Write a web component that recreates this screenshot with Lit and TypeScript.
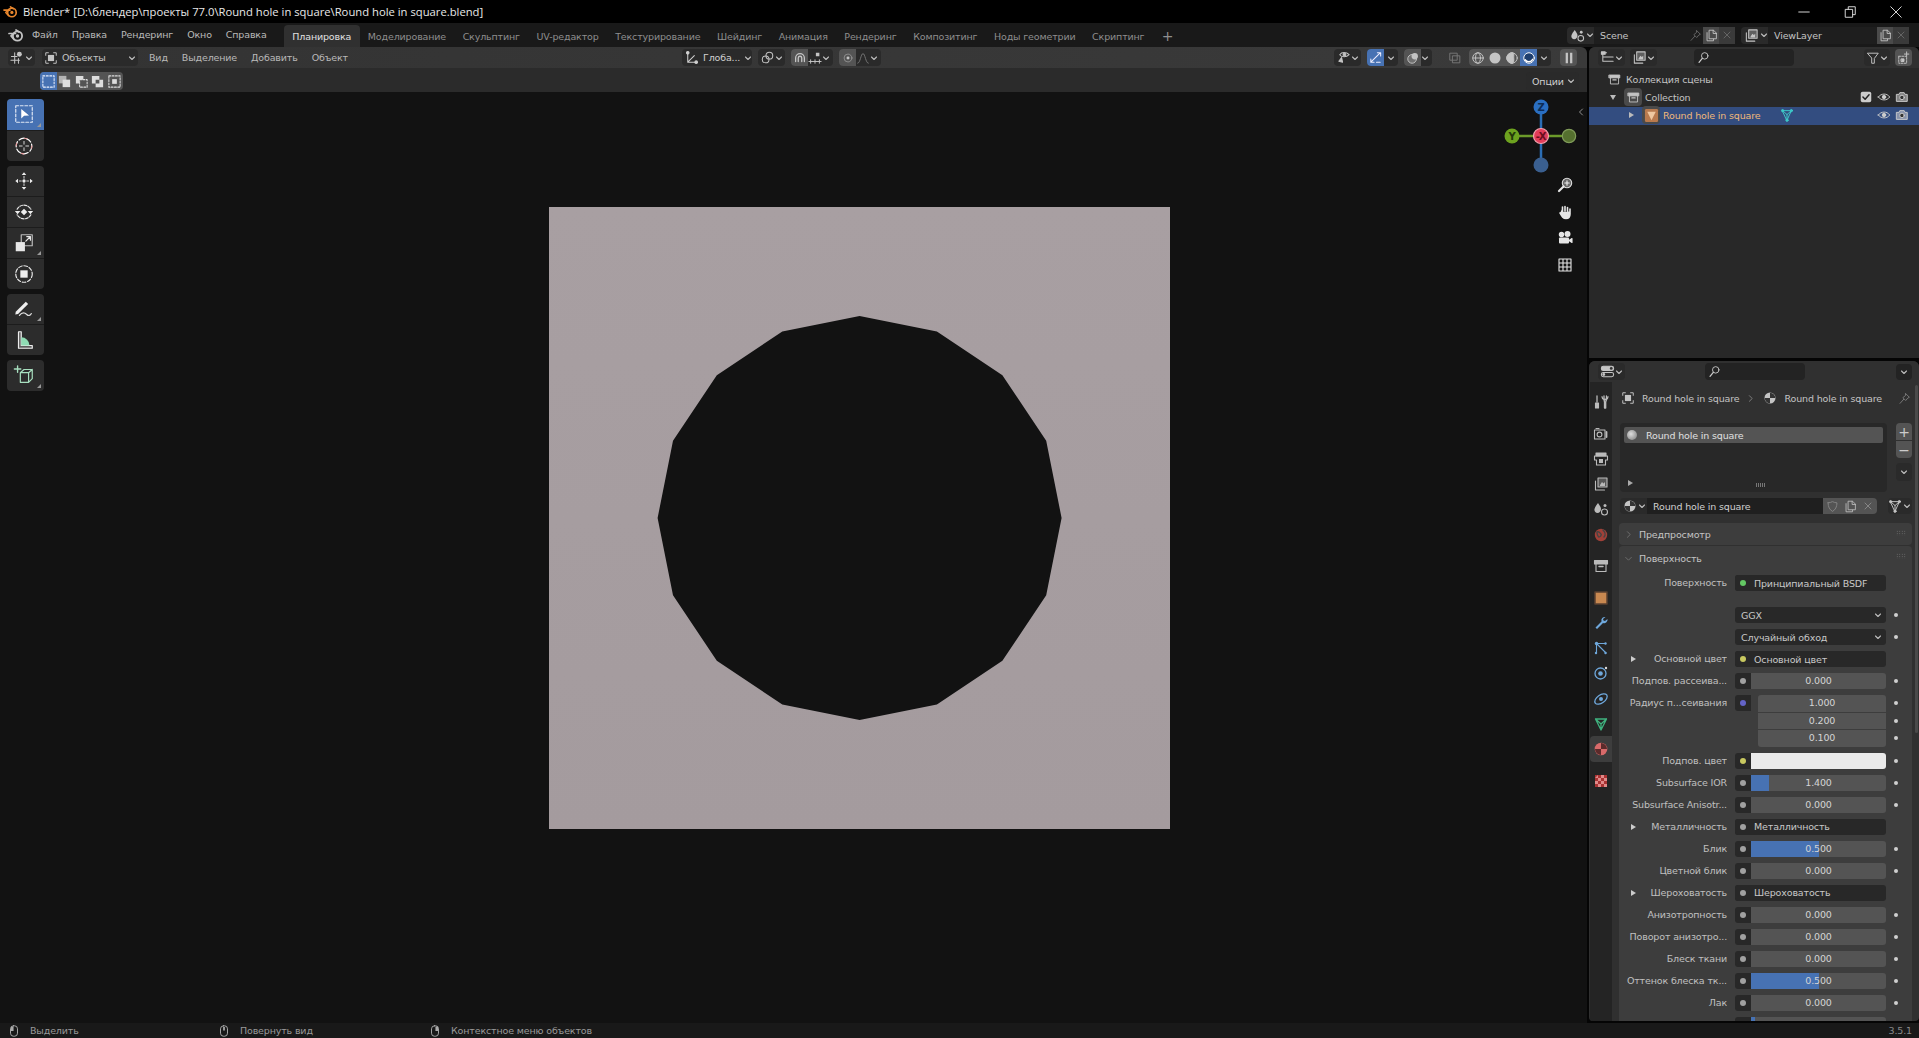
import { LitElement, html, css, svg } from "lit";
import { customElement } from "lit/decorators.js";

const S = (body: unknown, size = 16, cls = "") =>
  html`<svg class="ic ${cls}" viewBox="0 0 16 16" width=${size} height=${size} fill="none" stroke="currentColor" stroke-width="1.1" stroke-linecap="round" stroke-linejoin="round">${body}</svg>`;

const chev = html`<svg class="chev" viewBox="0 0 8 8" width="8" height="8" fill="none" stroke="currentColor" stroke-width="1.1" stroke-linecap="round" stroke-linejoin="round"><path d="M1.5 3l2.5 2.5L6.5 3"/></svg>`;

const p = {
  logo: svg`<circle cx="9.5" cy="9" r="4.6" stroke-width="1.8"/><circle cx="9.5" cy="9" r="1.7" fill="currentColor" stroke="none"/><path d="M1 6.5h6.5M3 9L6 6.5M8 3l3 2M3 9l3 3.5" stroke-width="1.7"/>`,
  view3d: svg`<path d="M5 3v11M1 11h9M1.5 7h6M9 14V9"/><circle cx="10" cy="4.5" r="2.6" fill="currentColor" stroke="none"/>`,
  object: svg`<path d="M2 5V2h3M11 2h3v3M14 11v3h-3M5 14H2v-3"/><rect x="4.5" y="4.5" width="7" height="7" fill="currentColor" stroke="none"/>`,
  axes: svg`<path d="M4 3v10h9M4 13l7-7"/><circle cx="4" cy="3" r="1.4" fill="currentColor"/><circle cx="13" cy="13" r="1.4" fill="currentColor"/>`,
  link: svg`<circle cx="6" cy="10" r="3.6"/><circle cx="10" cy="6" r="3.6"/>`,
  snap: svg`<path d="M3 12V8a5 5 0 0 1 10 0v4M6 12V8a2 2 0 0 1 4 0v4" stroke-width="1.5"/>`,
  snapTo: svg`<path d="M1 12h14M3 10v4M8 10v4M13 10v4"/><rect x="9" y="2" width="4" height="4" fill="currentColor" stroke="none"/>`,
  prop: svg`<circle cx="8" cy="8" r="4.5" stroke-opacity=".5"/><circle cx="8" cy="8" r="1.7" fill="currentColor" stroke="none"/>`,
  falloff: svg`<path d="M2 14c3 0 3.5-11 6-11s3 11 6 11"/>`,
  vis: svg`<path d="M3 12l3-4 1 5z" fill="currentColor"/><path d="M5 5c2-3 7-3 10 0-3 3-8 3-10 0z" transform="translate(-1 0)"/><circle cx="9" cy="5" r="1.5" fill="currentColor"/>`,
  gizmo: svg`<path d="M3 13L13 3M10 3h3.5v3.5M3 9.5V13h3.5M9 13h4"/>`,
  overlay: svg`<circle cx="7" cy="9" r="5" fill="currentColor" fill-opacity=".25"/><circle cx="10" cy="6" r="3.6" fill="currentColor" stroke="none"/>`,
  xray: svg`<rect x="2.5" y="2.5" width="8" height="8"/><rect x="5.5" y="5.5" width="8" height="8"/>`,
  wire: svg`<circle cx="8" cy="8" r="6"/><ellipse cx="8" cy="8" rx="2.8" ry="6"/><path d="M2 8h12"/>`,
  solid: svg`<circle cx="8" cy="8" r="6.3" fill="currentColor" stroke="none"/>`,
  look: svg`<circle cx="8" cy="8" r="6"/><path d="M8 2a6 6 0 0 1 0 12c-3 0-2-3-2-5s-1-7 2-7z" fill="currentColor" transform="rotate(180 8 8)"/>`,
  render: svg`<circle cx="8" cy="8" r="6" fill="#1e3e6e"/><path d="M3.6 10a5 5 0 0 0 8.6-.5" stroke-width="1.6"/>`,
  pause: svg`<path d="M5.5 2v12M10.5 2v12" stroke-width="2.6" stroke-linecap="butt"/>`,
  outliner: svg`<path d="M2 3h5M5 7.5h9M5 12h9M3 3v9h2M3 7.5h2" /><rect x="1.5" y="2" width="4" height="2.6" fill="currentColor"/>`,
  layers: svg`<rect x="5" y="2" width="9" height="9" fill="currentColor" fill-opacity=".35"/><path d="M2.5 5v9h9"/><path d="M7 9l2-3 1.5 1.5L12 6v4H7z" fill="currentColor" stroke="none"/>`,
  search: svg`<circle cx="9.5" cy="6" r="4"/><path d="M6.5 9L2.5 14" stroke-width="1.5"/>`,
  filter: svg`<path d="M2 2.5h12L9.5 8.5V14h-3V8.5z"/>`,
  newcol: svg`<rect x="2" y="6" width="9" height="8" stroke-dasharray="2 1.5"/><rect x="5" y="9" width="3" height="3" fill="currentColor"/><path d="M11 1v5M8.5 3.5h5"/>`,
  box: svg`<rect x="1.5" y="2.5" width="13" height="3.5" fill="currentColor"/><path d="M3 6v7.5h10V6"/><path d="M6 8.5h4" stroke-width="1.5"/>`,
  eye: svg`<path d="M1.5 8c3-4.5 10-4.5 13 0-3 4.5-10 4.5-13 0z"/><circle cx="8" cy="8" r="2" fill="currentColor"/>`,
  cam: svg`<path d="M2 5h2.5l1-2h5l1 2H14v8H2z" fill="currentColor" fill-opacity=".55"/><circle cx="8" cy="8.5" r="2.6" fill="#333"/>`,
  check: svg`<rect x="2" y="2" width="12" height="12" rx="2" fill="currentColor" stroke="none"/><path d="M4.5 8l2.5 2.5 4.5-5" stroke="#222" stroke-width="1.7"/>`,
  mesh: svg`<path d="M3 3h10L8 14z M3 3l5 4.5L13 3M8 7.5V14"/><circle cx="3" cy="3" r="1.3" fill="currentColor"/><circle cx="13" cy="3" r="1.3" fill="currentColor"/><circle cx="8" cy="14" r="1.3" fill="currentColor"/>`,
  scene: svg`<path d="M5 2c2 3 3 4 3 6s-1.5 4-3.5 4S1 10 1.5 8 3.5 4 5 2z" fill="currentColor" stroke="none"/><circle cx="11.5" cy="11" r="3"/><circle cx="12" cy="4.5" r="1.5" fill="currentColor" stroke="none"/>`,
  pin: svg`<path d="M9.5 2l4.5 4.5-2 1-2.5 3L6 7l3-2.5zM7 9l-4.5 5"/>`,
  copy: svg`<path d="M2.5 4.5v10h8v-2M5.5 1.5h5l3.5 3.5v7h-8.500zM10 1.500v4h4"/>`,
  x: svg`<path d="M4 4l8 8M12 4l-8 8" stroke-width="1.3"/>`,
  shield: svg`<path d="M2.5 3.5c2 0 4-.8 5.5-1.5 1.5.7 3.5 1.5 5.5 1.5 0 5-2 8.5-5.5 10.5C4.5 12 2.5 8.5 2.5 3.5z"/>`,
  material: svg`<circle cx="8" cy="8" r="6.3" fill="currentColor" stroke="none"/><path d="M8 2a6 6 0 0 1 6 6H8v6a6 6 0 0 1-6-6h6z" fill="#333" stroke="none"/>`,
  tool: svg`<path d="M11 2v3.5M13.5 2v3.5M11 5.5h2.5L12.7 8v6h-1.2V8zM4 2v6" stroke-width="1.3"/><path d="M2.5 9h3v5h-3z" fill="currentColor"/><path d="M9 2.5c0 2 1 3 3 3s3-1 3-3"/>`,
  tRender: svg`<path d="M1.5 4h10.5v9H1.5z"/><path d="M3 2.5h3"/><circle cx="6.5" cy="8.5" r="2.4"/><path d="M13.5 6v5" stroke-width="1.8"/>`,
  tOutput: svg`<path d="M3 2h10v3H3z" fill="currentColor"/><path d="M1.5 5h13v4h-2v5H3.5V9h-2z"/><rect x="6" y="8" width="4" height="4" fill="currentColor" stroke="none"/>`,
  tWorld: svg`<circle cx="8" cy="8" r="6.2" fill="#a04038" stroke="none"/><path d="M4 5c2-1 3 1 4 2s-1 3-2 3-2-3-2-5zM10 3c2 2 3 5 1 7" stroke="#444" stroke-width="1.4"/>`,
  tObject: svg`<rect x="2" y="2" width="12" height="12" fill="#c88850" stroke="#5a4030" stroke-width="1.5"/>`,
  wrench: svg`<path d="M12.5 2a3.5 3.5 0 0 0-4 4.5L2.5 12.5 4 14l6-6a3.5 3.5 0 0 0 4.5-4L12 6l-1.5-.5L10 4z" fill="#6fa8dc" stroke="none"/>`,
  particles: svg`<circle cx="3.5" cy="3.5" r="1.7" fill="#6fa8dc" stroke="none"/><circle cx="12.5" cy="3.5" r="1.2" fill="#6fa8dc" stroke="none"/><circle cx="12.5" cy="13" r="1.2" fill="#6fa8dc" stroke="none"/><circle cx="3" cy="13" r="1.2" fill="#6fa8dc" stroke="none"/><path d="M3.5 3.5L13 13M3.5 3.5V13M3.5 3.5L12.5 3.5" stroke="#6fa8dc"/>`,
  physics: svg`<circle cx="7.5" cy="8.5" r="5.5" stroke="#6fa8dc" stroke-width="1.3"/><circle cx="7.5" cy="8.5" r="2.3" fill="#6fa8dc" stroke="none"/><circle cx="13" cy="3" r="1.2" fill="#ddd" stroke="none"/>`,
  constraint: svg`<ellipse cx="8" cy="8" rx="7" ry="4" transform="rotate(-35 8 8)" stroke="#6fa8dc" stroke-width="1.3"/><circle cx="8" cy="8" r="2" fill="#6fa8dc" stroke="none"/>`,
  tData: svg`<path d="M2.5 3h11L8 14zM2.5 3L8 8l5.5-5M8 8v6" stroke="#3fb27f" stroke-width="1.3"/>`,
  tMat: svg`<circle cx="8" cy="8" r="6.3" fill="#d86a6a" stroke="none"/><path d="M8 2a6 6 0 0 1 6 6H8v6a6 6 0 0 1-6-6h6z" fill="#5b2b2b" stroke="none"/>`,
  tTex: svg`<rect x="2" y="2" width="12" height="12" fill="#a33" stroke="none"/><path d="M2 5h3V2M5 5h3v3H5zM8 5V2h3v3zM11 5h3v3h-3zM2 8h3v3H2zM8 8h3v3H8zM5 11h3v3H5zM11 11h3v3h-3z" fill="#e08a8a" stroke="none"/>`,
  mouseL: svg`<rect x="4" y="2" width="8" height="12" rx="3.5"/><path d="M4.5 3h3v5h-3z" fill="currentColor" stroke="none"/>`,
  mouseM: svg`<rect x="4" y="2" width="8" height="12" rx="3.5"/><path d="M7 3.5h2v4H7z" fill="currentColor" stroke="none"/>`,
  mouseR: svg`<rect x="4" y="2" width="8" height="12" rx="3.5"/><path d="M8.5 3h3v5h-3z" fill="currentColor" stroke="none"/>`,
  mNew: svg`<rect x="2" y="2" width="12" height="12" stroke-dasharray="2 1.7"/>`,
  mAdd: svg`<rect x="2" y="2" width="8" height="8" fill="currentColor" stroke="none" fill-opacity=".7"/><rect x="6" y="6" width="8" height="8" fill="currentColor" stroke="none"/>`,
  mSub: svg`<rect x="6" y="6" width="8" height="8" stroke-dasharray="2 1.5"/><path d="M2 2h8v4H6v4H2z" fill="currentColor" stroke="none"/>`,
  mXor: svg`<path d="M2 2h8v4H6v4H2zM10 6h4v8H6v-4h4z" fill="currentColor" stroke="none"/>`,
  mInt: svg`<rect x="2" y="2" width="12" height="12" stroke-dasharray="2 1.5"/><rect x="5.5" y="5.5" width="5" height="5" fill="currentColor" stroke="none"/>`,
  zoom: svg`<circle cx="10" cy="6" r="4.7" fill="#6a6a6a" stroke="#ddd"/><path d="M10 3.8v4.4M7.8 6h4.4" stroke="#eee"/><path d="M6.5 9.5L2 14" stroke-width="2.2"/>`,
  hand: svg`<path d="M3 9l2.5 2V4.5M5.5 7V3M8 7V2.5M10.5 7V3.5M10.5 7V5M13 8V5v5c0 3-2 4.5-4 4.5-3 0-4-2-6-5.5z" fill="currentColor" stroke-width="1.6"/>`,
  camera: svg`<circle cx="4.5" cy="4.5" r="2.7" fill="currentColor" stroke="none"/><circle cx="10.5" cy="4" r="3" fill="currentColor" stroke="none"/><rect x="2" y="7.5" width="10" height="6" rx="1" fill="currentColor" stroke="none"/><path d="M12 10.5l3-2v4z" fill="currentColor"/>`,
  grid: svg`<path d="M2 2h12v12H2zM6 2v12M10 2v12M2 6h12M2 10h12"/>`,
};

const T = (body: unknown) => html`<svg class="ic" viewBox="0 0 24 24" width="22" height="22" fill="none" stroke="#e6e6e6" stroke-width="1.3" stroke-linejoin="round" stroke-linecap="round">${body}</svg>`;
const tools = {
  select: svg`<rect x="3" y="3" width="18" height="18" stroke-dasharray="3 2" stroke="#dfe7f5"/><path d="M9 6.5v10.5l3-3 5.5-.5z" fill="#fff" stroke="none"/>`,
  cursor: svg`<circle cx="12" cy="12" r="8.5" stroke="#fff" stroke-dasharray="6 2.5"/><circle cx="12" cy="12" r="8.5" stroke="#e8a0a0" stroke-dasharray="2.5 11" /><path d="M12 7v3M12 14v3M7 12h3M14 12h3" stroke-width="1"/>`,
  move: svg`<path d="M12 2.5l2.5 3h-5zM12 21.5l-2.5-3h5zM2.5 12l3-2.5v5zM21.5 12l-3 2.5v-5z" fill="#eee" stroke="none"/><circle cx="12" cy="12" r="1.8" fill="#eee" stroke="none"/><path d="M12 7v2M12 15v2M7 12h2M15 12h2" stroke-width="1"/>`,
  rotate: svg`<path d="M4.5 9a8.5 8.5 0 0 1 15 0M19.5 15a8.5 8.5 0 0 1-15 0" stroke-dasharray="3 1.5"/><path d="M2 11h6l-3 3.5zM22 11h-6l3 3.5z" fill="#eee" stroke="none"/><rect x="9.5" y="9.5" width="5" height="5" transform="rotate(45 12 12)" fill="#eee" stroke="none"/>`,
  scale: svg`<rect x="9" y="3" width="12" height="12" stroke="#bbb"/><rect x="3" y="11" width="10" height="10" fill="#e6e6e6" stroke="none"/><path d="M14 10l4.5-4.5M15 5h4v4" />`,
  transform: svg`<circle cx="12" cy="12" r="9" stroke-dasharray="4 2"/><rect x="8" y="8" width="8" height="8" fill="#eee" stroke="none"/>`,
  annotate: svg`<path d="M3 15L14 4l2.5 2.5L5.5 17.5 2.5 18z" fill="#eee" stroke="none"/><path d="M7 19c3-4 6-3 8-1s4 1 5-1" stroke="#ddd"/>`,
  measure: svg`<path d="M6 3h3v15h12v3H6z" fill="#eee" fill-opacity=".25" stroke="#eee"/><path d="M9 9a9 9 0 0 1 9 9H9z" fill="#8fdcb4" stroke="none"/>`,
  add: svg`<path d="M8 9.5l4-3.5h9v10l-4 4H8zM8 9.5h9V20M17 9.5L21 6" stroke="#a8e0c0"/><path d="M5 2v7M1.5 5.5h7" stroke="#a8e0c0" stroke-width="1.5"/>`,
};

type Row = { l?: string; t: string; v?: string; s?: string; f?: number; tri?: boolean; vals?: string[] };
const G = "#a1a1a1";
const Y = "#c8c860";
const rows: Row[] = [
  { l: "Поверхность", t: "link", v: "Принципиальный BSDF", s: "#63c763" },
  { t: "gap" },
  { t: "select", v: "GGX" },
  { t: "select", v: "Случайный обход" },
  { l: "Основной цвет", t: "link", v: "Основной цвет", s: Y, tri: true },
  { l: "Подпов. рассеива...", t: "slider", v: "0.000", s: G, f: 0 },
  { l: "Радиус п...сеивания", t: "vector", vals: ["1.000", "0.200", "0.100"], s: "#6363c7" },
  { l: "Подпов. цвет", t: "color", s: Y },
  { l: "Subsurface IOR", t: "slider", v: "1.400", s: G, f: 13 },
  { l: "Subsurface Anisotr...", t: "slider", v: "0.000", s: G, f: 0 },
  { l: "Металличность", t: "link", v: "Металличность", s: G, tri: true },
  { l: "Блик", t: "slider", v: "0.500", s: G, f: 50 },
  { l: "Цветной блик", t: "slider", v: "0.000", s: G, f: 0 },
  { l: "Шероховатость", t: "link", v: "Шероховатость", s: G, tri: true },
  { l: "Анизотропность", t: "slider", v: "0.000", s: G, f: 0 },
  { l: "Поворот анизотро...", t: "slider", v: "0.000", s: G, f: 0 },
  { l: "Блеск ткани", t: "slider", v: "0.000", s: G, f: 0 },
  { l: "Оттенок блеска тк...", t: "slider", v: "0.500", s: G, f: 50 },
  { l: "Лак", t: "slider", v: "0.000", s: G, f: 0 },
  { l: "Шероховатость лака", t: "slider", v: "0.030", s: G, f: 3 },
];

const hole = Array.from({ length: 16 }, (_, i) => {
  const a = (i * Math.PI) / 8;
  return `${(310.6 + 202 * Math.cos(a)).toFixed(1)},${(311 + 202 * Math.sin(a)).toFixed(1)}`;
}).join(" L");

const tabs: [unknown, string?][] = [
  [p.tool], [p.tRender, "g"], [p.tOutput], [p.layers], [p.scene], [p.tWorld],
  [p.box, "g"], [p.tObject, "g"], [p.wrench], [p.particles], [p.physics], [p.constraint], [p.tData], [p.tMat, "act"], [p.tTex, "g"],
];

@customElement("app-root")
export class AppRoot extends LitElement {
  static styles = css`
    :host { display: block; width: 1919px; height: 1038px; overflow: hidden; background: #000; color: #c4c4c4;
      font: 9.5px "DejaVu Sans", sans-serif; letter-spacing: -0.15px; white-space: nowrap; }
    .ic { display: block; flex: none; }
    .chev { display: block; flex: none; color: #bdbdbd; }
    .title { height: 23px; display: flex; align-items: center; color: #e8e8e8; font: 11.25px "Open Sans", sans-serif; letter-spacing: 0; }
    .tlogo { margin: 0 5px 0 3px; color: #e8872e; }
    .winbtns { margin-left: auto; display: flex; color: #ddd; }
    .winbtn { width: 46px; display: flex; justify-content: center; }
    .topbar { height: 24px; background: #191919; display: flex; align-items: center; padding-left: 8px; }
    .menu { display: flex; align-items: center; color: #b9b9b9; }
    .topmenu { margin-left: 8px; gap: 14px; width: 252px; flex: none; padding-bottom: 2px; box-sizing: border-box; }
    .wtabs { display: flex; align-self: flex-end; height: 22px; }
    .wtab { padding: 1px 8.3px 0; display: flex; align-items: center; color: #8e8e8e; }
    .wtab.on { background: #303030; color: #e0e0e0; border-radius: 4px 4px 0 0; padding: 1px 8.3px 0; }
    .plus { margin-left: 9px; color: #8e8e8e; font-size: 14px; align-self: center; }
    .scene { margin-left: auto; display: flex; gap: 6px; padding-right: 10px; }
    .sel { width: 168px; height: 17px; border-radius: 4px; background: #1e1e1e; display: flex; align-items: center; color: #c4c4c4; }
    .sel .pre { width: 27px; height: 100%; display: flex; align-items: center; gap: 1px; padding-left: 3px; box-sizing: border-box; background: #2a2a2a; border-radius: 4px 0 0 4px; }
    .sel .nm { flex: 1; padding-left: 6px; }
    .sel .b { width: 16px; height: 100%; display: flex; align-items: center; justify-content: center; }
    .sel .b.grey { background: #4a4a4a; }
    .sel .b.dim { background: #3a3a3a; color: #666; }
    .sel .b.pin { color: #6a6a6a; }
    .main { height: 976px; display: flex; background: #050505; }
    .viewport { width: 1587px; display: flex; flex-direction: column; border-radius: 0 6px 0 0; overflow: hidden; }
    .vh { height: 21px; background: linear-gradient(90deg, #333, #3a3a3a); display: flex; align-items: center; padding-left: 8px; flex: none; }
    .vleft { width: 674px; flex: none; display: flex; align-items: center; }
    .dd { display: flex; align-items: center; height: 17px; background: #2a2a2a; border-radius: 4px; padding: 0 2px; box-sizing: border-box; }
    .dd.mode { width: 96px; margin-left: 7px; gap: 4px; }
    .dd.mode .chev { margin-left: auto; }
    .vmenu { margin-left: 11px; gap: 14px; }
    .centerhd { display: flex; gap: 6px; align-items: center; }
    .dd.tr { width: 70px; gap: 4px; color: #d0d0d0; }
    .dd .on, .jb.on { background: #545454; }
    .jb { width: 17px; height: 17px; display: flex; align-items: center; justify-content: center; border-radius: 4px 0 0 4px; }
    .dd.pad0 { padding: 0 3px 0 0; }
    .dim { color: #777; }
    .righthd { margin-left: auto; margin-right: 10px; display: flex; align-items: center; gap: 6px; }
    .dd.bluebtn { padding: 0 3px 0 0; }
    .dd.bluebtn .jb { background: #4772b3; color: #eef; }
    .xr { margin-left: 10px; }
    .shade { display: flex; align-items: center; height: 17px; background: #2a2a2a; border-radius: 4px; margin-left: 1px; }
    .shade .s { width: 17px; height: 17px; display: flex; align-items: center; justify-content: center; background: #545454; }
    .shade .s:first-child { border-radius: 4px 0 0 4px; }
    .shade .s.act { background: #4772b3; color: #fff; }
    .shade .c { width: 14px; display: flex; justify-content: center; }
    .pausebtn { width: 17px; height: 17px; margin-left: 3px; background: #545454; border-radius: 4px; display: flex; align-items: center; justify-content: center; }
    .vt { height: 24px; background: #2b2b2b; display: flex; align-items: center; padding: 2px 0 0 40px; box-sizing: border-box; flex: none; }
    .modes { display: flex; background: #545454; border-radius: 4px; overflow: hidden; color: #ddd; }
    .modes div { width: 16.5px; height: 18px; display: flex; align-items: center; justify-content: center; }
    .modes .act { background: #4772b3; color: #eaf1ff; }
    .opts { margin-left: auto; margin-right: 8px; width: 53px; height: 19px; box-sizing: border-box; background: #2a2a2a; border-radius: 4px; display: flex; align-items: center; justify-content: space-between; padding: 0 4px 0 6px; color: #d0d0d0; }
    .canvas { flex: 1; background: #121212; position: relative; overflow: hidden; }
    .model { position: absolute; left: 549px; top: 115px; }
    .toolbar { position: absolute; left: 7px; top: 7px; display: flex; flex-direction: column; gap: 5px; }
    .tg { width: 37px; background: #2c2c2c; border-radius: 4px; display: flex; flex-direction: column; overflow: hidden; }
    .tb { height: 30.75px; display: flex; align-items: center; justify-content: center; position: relative; box-sizing: border-box; padding-right: 3px; }
    .tb + .tb { border-top: 1px solid #1c1c1c; }
    .tb.act { background: #4772b3; }
    .tb.more::after { content: ""; position: absolute; right: 3px; bottom: 3px; border-right: 4px solid #999; border-top: 4px solid transparent; }
    .gizmo { position: absolute; left: 1500px; top: 4px; }
    .nav { position: absolute; left: 1557px; top: 85px; display: flex; flex-direction: column; gap: 10.7px; color: #e6e6e6; }
    .collapse { position: absolute; left: 1575px; top: 14px; color: #aaa; }
    .right { width: 330px; margin-left: 2px; display: flex; flex-direction: column; }
    .outliner { height: 311px; background: #282828; border-radius: 6px 6px 0 0; overflow: hidden; flex: none; }
    .oh { height: 21px; display: flex; align-items: center; padding-left: 9px; background: #303030; gap: 5px; }
    .search { height: 17px; background: #232323; border-radius: 4px; display: flex; align-items: center; padding-left: 3px; box-sizing: border-box; color: #ccc; }
    .search.a { width: 100px; margin-left: 32px; }
    .search.b { width: 100px; margin-left: 79px; }
    .filter { margin-left: auto; }
    .newc { width: 17px; height: 17px; background: #545454; border-radius: 4px; margin-right: 7px; display: flex; align-items: center; justify-content: center; }
    .orows { padding-top: 3px; }
    .orow { height: 18px; box-sizing: border-box; padding-bottom: 2px; display: flex; align-items: center; color: #c4c4c4; position: relative; }
    .orow.sel2 { background: #334d80; color: #f0b87a; }
    .orow .lead { flex: none; display: flex; align-items: center; justify-content: flex-end; }
    .lead.l1 { width: 16px; }
    .lead.l2 { width: 35px; }
    .lead.l3 { width: 53px; }
    .iconbox { width: 18px; height: 18px; flex: none; display: flex; align-items: center; justify-content: center; border-radius: 4px; margin-right: 3px; }
    .iconbox.hl { background: #4a4a4a; }
    .tri { width: 0; height: 0; border-left: 5px solid #bbb; border-top: 3px solid transparent; border-bottom: 3px solid transparent; margin-right: 8px; }
    .tri.down { border-left: 3px solid transparent; border-right: 3px solid transparent; border-top: 5px solid #bbb; border-bottom: 0; }
    .orow .ends { margin-left: auto; margin-right: 10px; display: flex; gap: 4px; color: #ccc; }
    .meshic { margin-left: 20px; color: #3ec9c9; }
    .props { height: 660px; margin-top: 3px; background: #303030; border-radius: 6px 6px 4px 4px; overflow: hidden; flex: none; display: flex; flex-direction: column; }
    .ph { height: 21px; flex: none; display: flex; align-items: center; padding-left: 9px; background: #303030; gap: 1px; }
    .pchev { margin-left: auto; width: 16px; height: 16px; background: #232323; border-radius: 4px; margin-right: 7px; display: flex; align-items: center; justify-content: center; }
    .pbody { flex: 1; display: flex; overflow: hidden; }
    .ptabs { width: 22px; flex: none; margin-left: 1px; background: #242424; padding-top: 7.5px; box-sizing: border-box; display: flex; flex-direction: column; }
    .ptab { height: 25.2px; flex: none; display: flex; align-items: center; justify-content: center; color: #bbb; }
    .ptab.g { margin-top: 6.5px; }
    .ptab.act { background: #3d3d3d; border-radius: 4px 0 0 4px; }
    .panel { flex: 1; padding-left: 7px; overflow: hidden; position: relative; }
    .panel::after { content: ""; position: absolute; right: 1px; top: 3px; width: 3px; height: 348px; background: #4a4a4a; border-radius: 2px; }
    .ctx { height: 32px; display: flex; align-items: center; padding-left: 2px; gap: 6px; color: #c4c4c4; }
    .ctx .sep { color: #aaa; margin: 0 2px 0 1px; }
    .ctx .pin2 { margin-left: auto; margin-right: 8px; color: #808080; }
    .ctx .ml { margin-left: 1px; }
    .mrow { display: flex; margin-top: 9px; padding-left: 1px; }
    .mlist { width: 267px; height: 69px; background: #282828; border-radius: 4px; box-sizing: border-box; padding: 4px; position: relative; }
    .mitem { height: 16px; background: #545454; border-radius: 2px; display: flex; align-items: center; padding-left: 3px; gap: 9px; color: #e0e0e0; }
    .ball { width: 10px; height: 10px; border-radius: 50%; background: radial-gradient(circle at 40% 40%, #ddd, #777); }
    .mexp { position: absolute; left: 8px; bottom: 6px; border-left: 5px solid #aaa; border-top: 3px solid transparent; border-bottom: 3px solid transparent; }
    .mdots { position: absolute; left: 136px; bottom: 5px; width: 10px; height: 4px; background: repeating-linear-gradient(90deg, #777 0 1px, transparent 1px 2px); }
    .mside { margin-left: 9px; width: 16px; display: flex; flex-direction: column; }
    .mbtn { height: 17px; background: #545454; display: flex; align-items: center; justify-content: center; color: #ccc; font-size: 14px; }
    .mbtn.t { border-radius: 4px 4px 0 0; }
    .mbtn.b { border-radius: 0 0 4px 4px; margin-top: 1px; }
    .mbtn.c { background: #2a2a2a; border-radius: 4px; margin-top: 5px; height: 18px; }
    .nrow { display: flex; margin-top: 6px; height: 16px; padding-left: 1px; align-items: center; }
    .npre { width: 27px; height: 16px; background: #2a2a2a; display: flex; align-items: center; gap: 1px; padding-left: 3px; box-sizing: border-box; border-radius: 4px 0 0 4px; }
    .nfield { width: 176px; height: 16px; background: #1f1f1f; padding-left: 6px; box-sizing: border-box; display: flex; align-items: center; color: #d0d0d0; }
    .nb { width: 18px; height: 16px; background: #545454; display: flex; align-items: center; justify-content: center; color: #888; }
    .nb.lit { color: #bbb; }
    .nb.last { border-radius: 0 4px 4px 0; }
    .nend { margin-left: 11px; width: 24px; height: 16px; background: #2a2a2a; display: flex; align-items: center; gap: 1px; border-radius: 4px; }
    .sec { background: #3d3d3d; margin-right: 7px; border-radius: 4px; }
    .sec.pre { margin-top: 9px; height: 22px; display: flex; align-items: center; position: relative; gap: 6px; padding-left: 5px; }
    .sec.sur { margin-top: 1px; border-radius: 4px 4px 0 0; height: 500px; overflow: hidden; }
    .shead { height: 24px; display: flex; align-items: center; padding-left: 5px; gap: 6px; color: #c4c4c4; position: relative; }
    .grip { position: absolute; right: 6px; top: 7px; width: 10px; height: 6px; background: radial-gradient(circle, #777 0.5px, transparent 0.7px) 0 0 / 2.5px 2.5px; }
    .chevr { color: #888; }
    .rows { padding-top: 5px; display: flex; flex-direction: column; gap: 6px; }
    .row { display: flex; align-items: flex-start; }
    .lab { width: 108px; height: 16px; line-height: 16px; flex: none; text-align: right; position: relative; color: #c0c0c0; overflow: hidden; }
    .lab .tr2 { position: absolute; left: 12px; top: 5px; border-left: 5px solid #ccc; border-top: 3px solid transparent; border-bottom: 3px solid transparent; }
    .fld { width: 151px; margin-left: 8px; flex: none; display: flex; }
    .dark { height: 16px; width: 100%; background: #282828; border-radius: 3px; display: flex; align-items: center; color: #c8c8c8; }
    .dark.sel3 { padding: 0 4px 0 6px; box-sizing: border-box; justify-content: space-between; }
    .sock { width: 16px; height: 16px; flex: none; display: flex; align-items: center; justify-content: center; background: #282828; border-radius: 3px 0 0 3px; }
    .sock i { display: block; width: 6px; height: 6px; border-radius: 50%; }
    .dark .sock { margin-right: 3px; }
    .slider { flex: 1; height: 16px; background: #545454; border-radius: 0 3px 3px 0; position: relative; overflow: hidden; text-align: center; line-height: 16px; color: #d4d4d4; }
    .slider .fill { position: absolute; left: 0; top: 0; bottom: 0; background: #4772b3; }
    .slider span { position: relative; }
    .colorv { flex: 1; height: 16px; background: #ebebeb; border-radius: 0 3px 3px 0; }
    .vec { margin-left: 7px; flex: 1; display: flex; flex-direction: column; gap: 1px; }
    .vec div { height: 16.5px; background: #545454; text-align: center; line-height: 16.5px; color: #d4d4d4; }
    .vec div:first-child { border-radius: 3px 3px 0 0; }
    .vec div:last-child { border-radius: 0 0 3px 3px; }
    .dots { width: 4px; margin-left: 8px; display: flex; flex-direction: column; gap: 13.5px; padding-top: 6px; flex: none; }
    .dots b { display: block; width: 4px; height: 4px; border-radius: 50%; background: #d0d0d0; }
    .spacer { height: 4px; }
    .status { height: 15px; background: #191919; display: flex; align-items: center; color: #8f8f8f; }
    .sitem { display: flex; align-items: center; gap: 9px; color: #9a9a9a; }
    .sitem .ic { color: #aaa; }
    .s1 { margin-left: 7px; width: 210px; }
    .s2 { width: 211px; }
    .version { margin-left: auto; margin-right: 7px; color: #8a8a8a; }
  `;

  private row(r: Row) {
    if (r.t === "gap") return html`<div class="spacer"></div>`;
    const sock = html`<div class="sock"><i style="background:${r.s}"></i></div>`;
    let field: unknown = null;
    let n = 1;
    if (r.t === "link") field = html`<div class="dark">${sock}${r.v}</div>`;
    if (r.t === "select") field = html`<div class="dark sel3">${r.v}${chev}</div>`;
    if (r.t === "slider") field = html`${sock}<div class="slider"><div class="fill" style="width:${r.f}%"></div><span>${r.v}</span></div>`;
    if (r.t === "color") field = html`${sock}<div class="colorv"></div>`;
    if (r.t === "vector") { n = 3; field = html`${sock}<div class="vec">${r.vals!.map((v) => html`<div>${v}</div>`)}</div>`; }
    return html`<div class="row">
      <div class="lab">${r.tri ? html`<span class="tr2"></span>` : ""}${r.l ?? ""}</div>
      <div class="fld">${field}</div>
      ${r.t === "link" ? "" : html`<div class="dots">${Array.from({ length: n }, () => html`<b></b>`)}</div>`}
    </div>`;
  }

  render() {
    return html`
      <div class="title">
        <span class="tlogo">${S(p.logo, 15)}</span>
        Blender* [D:\\блендер\\проекты 77.0\\Round hole in square\\Round hole in square.blend]
        <div class="winbtns">
          <div class="winbtn">${S(svg`<path d="M2 8h12"/>`, 14)}</div>
          <div class="winbtn">${S(svg`<path d="M3 5h8v9H3zM6 5V2h8v9h-3"/>`, 14)}</div>
          <div class="winbtn">${S(svg`<path d="M2 2l12 12M14 2L2 14"/>`, 14)}</div>
        </div>
      </div>
      <div class="topbar">
        <span>${S(p.logo, 16)}</span>
        <div class="menu topmenu"><span>Файл</span><span>Правка</span><span>Рендеринг</span><span>Окно</span><span>Справка</span></div>
        <div class="wtabs">
          <div class="wtab on">Планировка</div>
          ${["Моделирование", "Скульптинг", "UV-редактор", "Текстурирование", "Шейдинг", "Анимация", "Рендеринг", "Композитинг", "Ноды геометрии", "Скриптинг"].map((t) => html`<div class="wtab">${t}</div>`)}
          <span class="plus">+</span>
        </div>
        <div class="scene">
          <div class="sel">
            <div class="pre">${S(p.scene, 15)}${chev}</div><div class="nm">Scene</div>
            <div class="b pin">${S(p.pin, 13)}</div><div class="b grey">${S(p.copy, 13)}</div><div class="b dim">${S(p.x, 12)}</div>
          </div>
          <div class="sel">
            <div class="pre">${S(p.layers, 15)}${chev}</div><div class="nm">ViewLayer</div>
            <div class="b grey">${S(p.copy, 13)}</div><div class="b dim">${S(p.x, 12)}</div>
          </div>
        </div>
      </div>
      <div class="main">
        <div class="viewport">
          <div class="vh">
            <div class="vleft">
              <div class="dd">${S(p.view3d, 15)}${chev}</div>
              <div class="dd mode">${S(p.object, 14)}<span>Объекты</span>${chev}</div>
              <div class="menu vmenu"><span>Вид</span><span>Выделение</span><span>Добавить</span><span>Объект</span></div>
            </div>
            <div class="centerhd">
              <div class="dd tr">${S(p.axes, 15)}<span>Глоба...</span>${chev}</div>
              <div class="dd">${S(p.link, 15)}${chev}</div>
              <div class="dd pad0"><div class="jb on">${S(p.snap, 14)}</div>${S(p.snapTo, 14)}${chev}</div>
              <div class="dd pad0"><div class="jb on">${S(p.prop, 14)}</div><span class="dim">${S(p.falloff, 14)}</span><span class="dim">${chev}</span></div>
            </div>
            <div class="righthd">
              <div class="dd">${S(p.vis, 15)}${chev}</div>
              <div class="dd bluebtn"><div class="jb">${S(p.gizmo, 15)}</div><span>&nbsp;</span>${chev}</div>
              <div class="dd pad0"><div class="jb on">${S(p.overlay, 14)}</div><span class="dim">${chev}</span></div>
              <span class="dim xr">${S(p.xray, 14)}</span>
              <div class="shade">
                <div class="s">${S(p.wire, 14)}</div><div class="s">${S(p.solid, 14)}</div><div class="s">${S(p.look, 14)}</div><div class="s act">${S(p.render, 14)}</div>
                <div class="c">${chev}</div>
              </div>
              <div class="pausebtn">${S(p.pause, 14)}</div>
            </div>
          </div>
          <div class="vt">
            <div class="modes">
              <div class="act">${S(p.mNew, 15)}</div><div>${S(p.mAdd, 15)}</div><div>${S(p.mSub, 15)}</div><div>${S(p.mXor, 15)}</div><div>${S(p.mInt, 15)}</div>
            </div>
            <div class="opts"><span>Опции</span>${chev}</div>
          </div>
          <div class="canvas">
            <svg class="model" width="621" height="622" viewBox="0 0 621 622">
              <defs><linearGradient id="sq" x1="0" y1="0" x2="0" y2="1"><stop offset="0" stop-color="#a89fa2"/><stop offset="1" stop-color="#a49b9e"/></linearGradient></defs>
              <path fill="url(#sq)" fill-rule="evenodd" d="M0 0H621V622H0Z M${hole}Z"/>
            </svg>
            <div class="toolbar">
              <div class="tg"><div class="tb act more">${T(tools.select)}</div><div class="tb">${T(tools.cursor)}</div></div>
              <div class="tg"><div class="tb">${T(tools.move)}</div><div class="tb">${T(tools.rotate)}</div><div class="tb more">${T(tools.scale)}</div><div class="tb">${T(tools.transform)}</div></div>
              <div class="tg"><div class="tb more">${T(tools.annotate)}</div><div class="tb">${T(tools.measure)}</div></div>
              <div class="tg"><div class="tb more">${T(tools.add)}</div></div>
            </div>
            <svg class="gizmo" width="84" height="84" viewBox="0 0 84 84" font-family="DejaVu Sans" font-weight="700" font-size="10" text-anchor="middle">
              <path d="M41 11V69" stroke="#2a6db5" stroke-width="2.5"/>
              <path d="M12 40H69" stroke="#6c9a2a" stroke-width="2.5"/>
              <circle cx="41" cy="11" r="7.5" fill="#2a6fc2"/><text x="41" y="14.5" fill="#0e2c55">Z</text>
              <circle cx="41" cy="69" r="7.5" fill="#3a5f8f"/>
              <circle cx="12" cy="40" r="7.5" fill="#6da21f"/><text x="12" y="43.5" fill="#24380a">Y</text>
              <circle cx="69" cy="40" r="6.7" fill="#55702f" stroke="#7f9a58" stroke-width="1.2"/>
              <circle cx="41" cy="40" r="7.5" fill="#e23d5a" stroke="#f3a3ae" stroke-width="1.2"/><text x="41" y="43.5" fill="#6b0d1e">-X</text>
            </svg>
            <div class="collapse">${S(svg`<path d="M10 4L6 8l4 4"/>`, 12)}</div>
            <div class="nav">${S(p.zoom, 16)}${S(p.hand, 16)}${S(p.camera, 16)}${S(p.grid, 16)}</div>
          </div>
        </div>
        <div class="right">
          <div class="outliner">
            <div class="oh">
              <div class="dd">${S(p.outliner, 15)}${chev}</div>
              <div class="dd">${S(p.layers, 15)}${chev}</div>
              <div class="search a">${S(p.search, 13)}</div>
              <div class="dd filter">${S(p.filter, 14)}${chev}</div>
              <div class="newc">${S(p.newcol, 14)}</div>
            </div>
            <div class="orows">
              <div class="orow"><div class="lead l1"></div><span class="iconbox">${S(p.box, 13)}</span>Коллекция сцены</div>
              <div class="orow"><div class="lead l2"><span class="tri down"></span></div><span class="iconbox hl">${S(p.box, 13)}</span>Collection
                <div class="ends">${S(p.check, 14)}${S(p.eye, 14)}${S(p.cam, 14)}</div></div>
              <div class="orow sel2"><div class="lead l3"><span class="tri"></span></div><span class="iconbox hl">${S(svg`<rect x="1" y="1" width="14" height="14" fill="#b97a4e" stroke="none" rx="1.5"/><path d="M3.5 4h9L8 13z" fill="#f0c8a0" stroke="none"/>`, 15)}</span>Round hole in square
                <span class="meshic">${S(p.mesh, 14)}</span>
                <div class="ends">${S(p.eye, 14)}${S(p.cam, 14)}</div></div>
            </div>
          </div>
          <div class="props">
            <div class="ph">
              <div class="dd">${S(svg`<rect x="1.5" y="2.5" width="13" height="4.5" rx="2" fill="currentColor"/><rect x="1.5" y="9" width="13" height="4.5" rx="2"/><circle cx="12" cy="4.7" r="1.5" fill="#333" stroke="none"/><circle cx="4" cy="11.2" r="1.5" fill="currentColor" stroke="none"/>`, 15)}${chev}</div>
              <div class="search b">${S(p.search, 13)}</div>
              <div class="pchev">${chev}</div>
            </div>
            <div class="pbody">
              <div class="ptabs">${tabs.map(([b, c]) => html`<div class="ptab ${c === "g" ? "g" : ""} ${c === "act" ? "act" : ""}">${S(b, 16)}</div>`)}</div>
              <div class="panel">
                <div class="ctx">${S(p.object, 14)}<span class="ml">Round hole in square</span><span class="sep">${S(svg`<path d="M6 3l5 5-5 5"/>`, 9)}</span>${S(p.material, 14)}<span class="ml">Round hole in square</span><span class="pin2">${S(p.pin, 13)}</span></div>
                <div class="mrow">
                  <div class="mlist">
                    <div class="mitem"><span class="ball"></span>Round hole in square</div>
                    <span class="mexp"></span><span class="mdots"></span>
                  </div>
                  <div class="mside">
                    <div class="mbtn t">+</div><div class="mbtn b">−</div><div class="mbtn c">${chev}</div>
                  </div>
                </div>
                <div class="nrow">
                  <div class="npre">${S(p.material, 14)}${chev}</div>
                  <div class="nfield">Round hole in square</div>
                  <div class="nb">${S(p.shield, 13)}</div><div class="nb lit">${S(p.copy, 13)}</div><div class="nb last">${S(p.x, 12)}</div>
                  <div class="nend">${S(p.mesh, 14)}${chev}</div>
                </div>
                <div class="sec pre"><span class="chevr">${S(svg`<path d="M6 3l5 5-5 5"/>`, 9)}</span>Предпросмотр<span class="grip"></span></div>
                <div class="sec sur">
                  <div class="shead"><span class="chevr">${S(svg`<path d="M3 6l5 5 5-5"/>`, 9)}</span>Поверхность<span class="grip"></span></div>
                  <div class="rows">${rows.map((r) => this.row(r))}</div>
                </div>
              </div>
            </div>
          </div>
        </div>
      </div>
      <div class="status">
        <div class="sitem s1">${S(p.mouseL, 14)}Выделить</div>
        <div class="sitem s2">${S(p.mouseM, 14)}Повернуть вид</div>
        <div class="sitem">${S(p.mouseR, 14)}Контекстное меню объектов</div>
        <div class="version">3.5.1</div>
      </div>
    `;
  }
}
